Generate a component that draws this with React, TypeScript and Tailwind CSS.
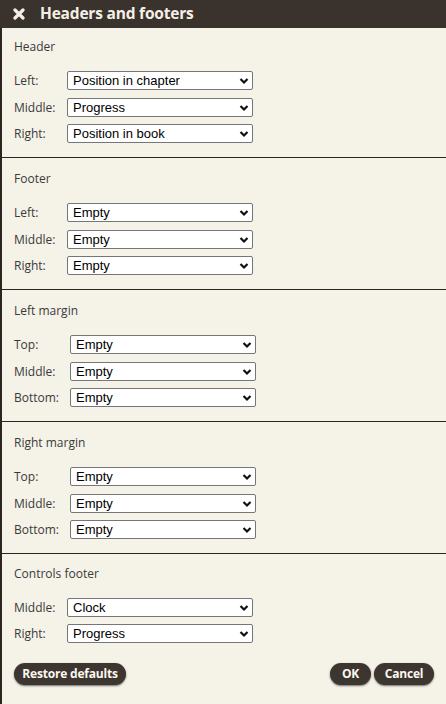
import type { ReactNode } from "react";

type Row = { label: string; value: string };

const sections: { title: string; labelCol: string; rows: Row[] }[] = [
  {
    title: "Header",
    labelCol: "grid-cols-[53px_186px]",
    rows: [
      { label: "Left:", value: "Position in chapter" },
      { label: "Middle:", value: "Progress" },
      { label: "Right:", value: "Position in book" },
    ],
  },
  {
    title: "Footer",
    labelCol: "grid-cols-[53px_186px]",
    rows: [
      { label: "Left:", value: "Empty" },
      { label: "Middle:", value: "Empty" },
      { label: "Right:", value: "Empty" },
    ],
  },
  {
    title: "Left margin",
    labelCol: "grid-cols-[56px_186px]",
    rows: [
      { label: "Top:", value: "Empty" },
      { label: "Middle:", value: "Empty" },
      { label: "Bottom:", value: "Empty" },
    ],
  },
  {
    title: "Right margin",
    labelCol: "grid-cols-[56px_186px]",
    rows: [
      { label: "Top:", value: "Empty" },
      { label: "Middle:", value: "Empty" },
      { label: "Bottom:", value: "Empty" },
    ],
  },
  {
    title: "Controls footer",
    labelCol: "grid-cols-[53px_186px]",
    rows: [
      { label: "Middle:", value: "Clock" },
      { label: "Right:", value: "Progress" },
    ],
  },
];

function FakeSelect({ value }: { value: string }) {
  return (
    <div className="relative h-[19px] w-[186px] bg-white border border-[#767676] rounded-[2px] flex items-center pl-[5px] font-['Liberation_Sans',Arial,sans-serif] text-[13px] text-black">
      <span className="leading-none">{value}</span>
      <svg
        className="absolute right-[3px] top-[5px]"
        width="10"
        height="8"
        viewBox="0 0 10 8"
      >
        <path d="M1.5 2 L5 5.5 L8.5 2" fill="none" stroke="#111" strokeWidth="2.2" />
      </svg>
    </div>
  );
}

function PillButton({ children, className }: { children: ReactNode; className?: string }) {
  return (
    <button
      className={
        "h-[22px] rounded-full bg-[#3d352f] text-[#fbf8f0] text-[12px] font-bold tracking-[-0.2px] shadow-[0_1px_2px_rgba(0,0,0,0.55)] " +
        (className ?? "")
      }
    >
      {children}
    </button>
  );
}

export default function App() {
  return (
    <div className="w-[446px] h-[704px] bg-[#f5f2e8] flex flex-col font-['Open_Sans','Noto_Sans',sans-serif] overflow-hidden">
      <div className="h-[28px] shrink-0 bg-[#3a322c] flex items-center pl-[13px] gap-[15px]">
        <svg width="12" height="12" viewBox="0 0 12 12">
          <path d="M2 2 L10 10 M10 2 L2 10" stroke="#f5f0e6" strokeWidth="3.2" strokeLinecap="round" />
        </svg>
        <span className="text-[#f5f0e6] text-[15.5px] font-bold leading-none tracking-[-0.2px]">
          Headers and footers
        </span>
      </div>
      <div className="flex-1 border-l-2 border-[#2b2622] flex flex-col">
        {sections.map((s, i) => {
          const last = i === sections.length - 1;
          return (
            <div
              key={s.title}
              className={
                i === 0
                  ? "px-[12px] pt-[10px] pb-[14px] border-b border-[#2b2622]"
                  : last
                    ? "px-[12px] pt-[11px]"
                    : "px-[12px] pt-[12px] pb-[14px] border-b border-[#2b2622]"
              }
            >
              <div className="h-[18px] leading-[18px] text-[12px] text-[#3a3a3a] mb-[15px]">
                {s.title}
              </div>
              <div
                className={
                  (last ? "grid gap-y-[7px] items-center " : "grid gap-y-[7.5px] items-center ") +
                  s.labelCol
                }
              >
                {s.rows.map((r) => (
                  <div key={r.label} className="contents">
                    <span className="text-[12px] text-[#3a3a3a] leading-[19px]">{r.label}</span>
                    <FakeSelect value={r.value} />
                  </div>
                ))}
              </div>
            </div>
          );
        })}
        <div className="flex items-center px-[12px] mt-[20px]">
          <PillButton className="w-[112px]">Restore defaults</PillButton>
          <div className="flex-1" />
          <div className="flex gap-[3px]">
            <PillButton className="w-[41px]">OK</PillButton>
            <PillButton className="w-[60px]">Cancel</PillButton>
          </div>
        </div>
      </div>
    </div>
  );
}
